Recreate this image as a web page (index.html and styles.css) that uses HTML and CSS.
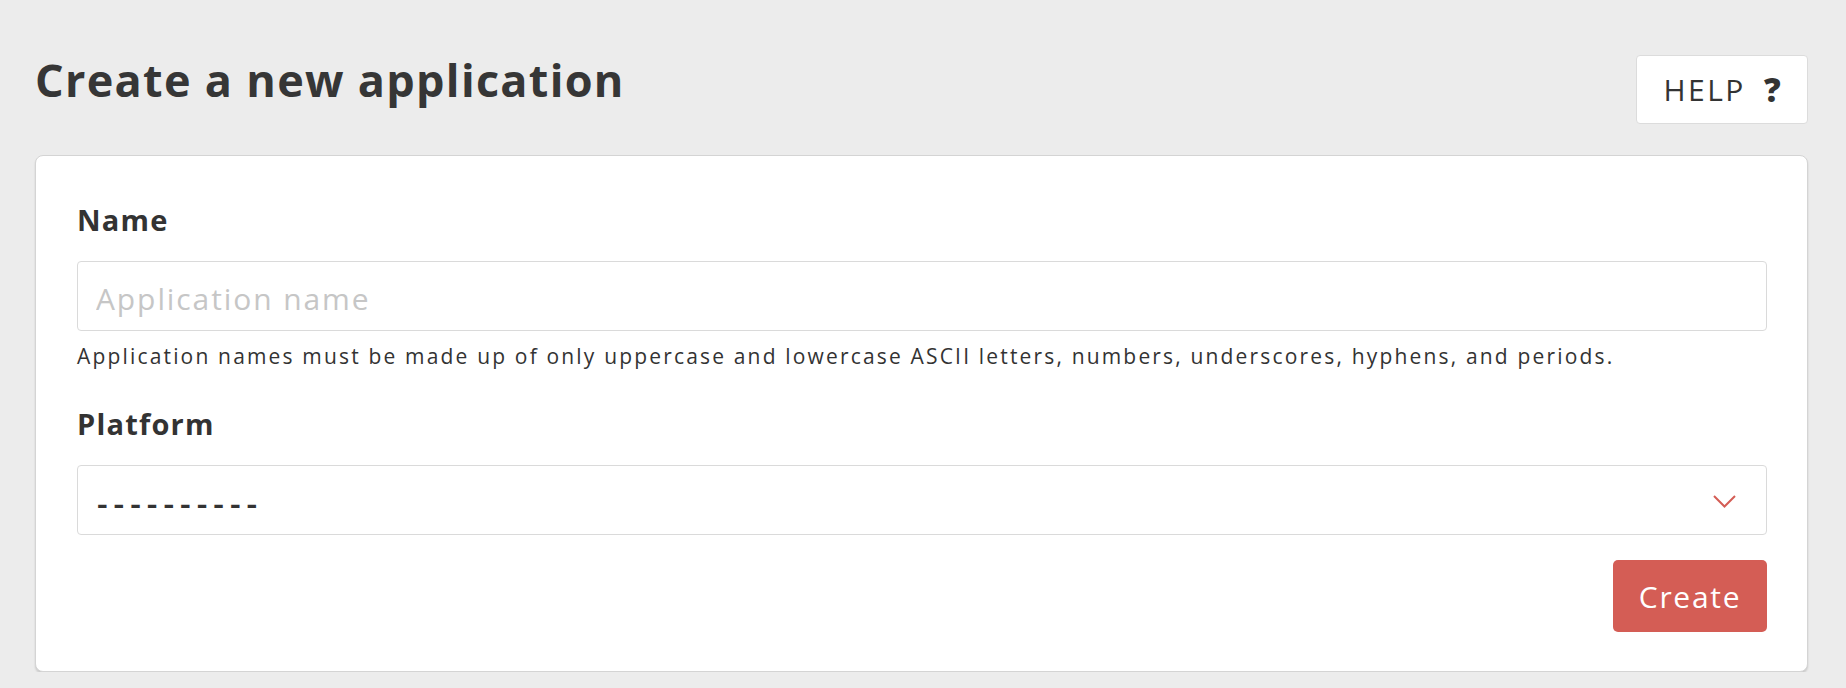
FILE: index.html
```html
<!DOCTYPE html>
<html lang="en">
<head>
<meta charset="utf-8">
<title>Create a new application</title>
<link rel="stylesheet" href="styles.css">
</head>
<body>
<div class="page">
  <header class="page-header">
    <h1 class="page-title">Create a new application</h1>
    <button class="help-btn" type="button">HELP <span class="help-q">?</span></button>
  </header>
  <form class="card">
    <label class="field-label" for="app-name">Name</label>
    <input class="text-input" id="app-name" type="text" placeholder="Application name">
    <p class="help-text">Application names must be made up of only uppercase and lowercase ASCII letters, numbers, underscores, hyphens, and periods.</p>
    <label class="field-label field-label--second">Platform</label>
    <div class="select-box">
      <span class="select-value">----------</span>
      <svg class="chevron" width="23" height="13" viewBox="0 0 23 13"><path d="M1 1 L11.5 11.5 L22 1" fill="none" stroke="#d45d55" stroke-width="2"/></svg>
    </div>
    <div class="actions">
      <button class="create-btn" type="button">Create</button>
    </div>
  </form>
</div>
</body>
</html>
```

FILE: styles.css
```css
* { box-sizing: border-box; }
html, body { margin: 0; padding: 0; }
body {
  background: #ececec;
  font-family: "Open Sans", "DejaVu Sans", sans-serif;
  color: #333333;
}
.page {
  padding: 53px 38px 0 35px;
}
.page-header {
  display: flex;
  justify-content: space-between;
  align-items: flex-start;
  margin-bottom: 31px;
}
.page-title {
  margin: 0;
  font-size: 45px;
  line-height: 54px;
  font-weight: 700;
  color: #363636;
  letter-spacing: 1.3px;
}
.help-btn {
  margin-top: 2px;
  height: 69px;
  width: 172px;
  background: #ffffff;
  border: 1px solid #dcdcdc;
  border-radius: 4px;
  font-family: inherit;
  font-size: 30px;
  font-weight: 400;
  color: #333;
  letter-spacing: 2.5px;
  padding: 0 0 0 0;
  display: flex;
  align-items: center;
  justify-content: center;
  gap: 18px;
}
.help-q {
  font-weight: 800;
  font-size: 33px;
  letter-spacing: 0;
}
.card {
  background: #ffffff;
  border: 1px solid #d4d4d4;
  border-radius: 8px;
  box-shadow: 0 2px 2px rgba(0,0,0,0.14);
  padding: 47px 40px 39px 41px;
  display: flex;
  flex-direction: column;
}
.field-label {
  display: block;
  font-size: 29px;
  line-height: 34px;
  font-weight: 700;
  color: #333;
  letter-spacing: 1.2px;
  margin-bottom: 24px;
}
.field-label--second {
  margin-top: 36px;
}
.text-input {
  display: block;
  width: 100%;
  height: 70px;
  border: 1px solid #dadada;
  border-radius: 4px;
  padding: 4px 18px 0 18px;
  font-family: inherit;
  font-size: 30px;
  letter-spacing: 1.9px;
  color: #333;
  outline: none;
  background: #fff;
}
.text-input::placeholder { color: #c6c6c6; }
.help-text {
  margin: 11px 0 0 0;
  font-size: 21px;
  line-height: 29px;
  letter-spacing: 2.17px;
  color: #333;
}
.select-box {
  height: 70px;
  border: 1px solid #dadada;
  border-radius: 4px;
  display: flex;
  align-items: center;
  justify-content: space-between;
  padding: 4px 30px 0 19px;
}
.select-value {
  font-size: 33px;
  font-weight: 600;
  letter-spacing: 6px;
  color: #333;
}
.chevron { display: block; margin-top: -1px; }
.actions {
  display: flex;
  justify-content: flex-end;
  margin-top: 25px;
}
.create-btn {
  width: 154px;
  height: 72px;
  background: #d45d55;
  border: none;
  border-radius: 5px;
  color: #fff;
  font-family: inherit;
  font-size: 30px;
  letter-spacing: 1.7px;
  padding: 0;
}
```
